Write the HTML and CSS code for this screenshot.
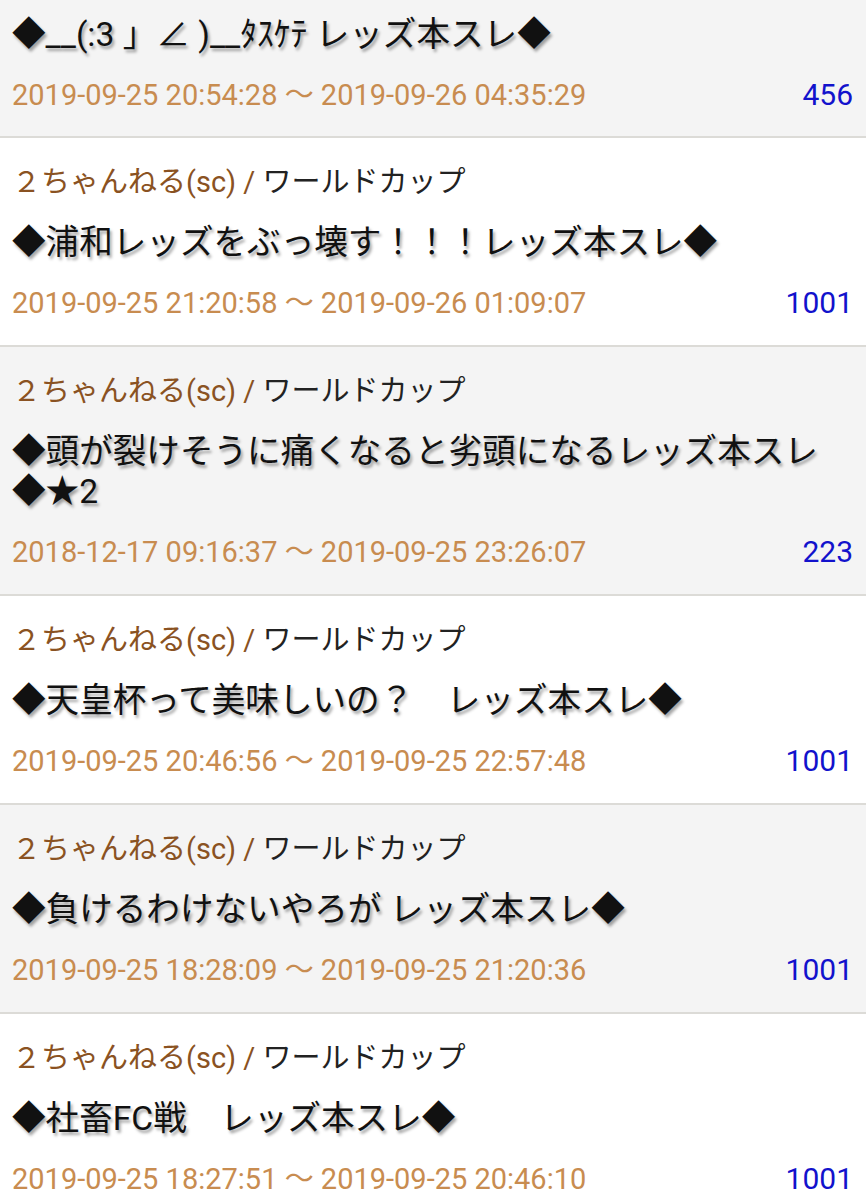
FILE: index.html
```html
<!DOCTYPE html>
<html lang="ja">
<head>
<meta charset="utf-8">
<title>スレッド一覧</title>
<link rel="stylesheet" href="styles.css">
</head>
<body>
<ul class="thread-list">
  <li class="thread thread-alt thread-first">
    <div class="thread-title">◆__(:3 」∠ )__ﾀｽｹﾃ レッズ本スレ◆</div>
    <div class="thread-meta"><span class="thread-date">2019-09-25 20:54:28 ～ 2019-09-26 04:35:29</span><span class="thread-count">456</span></div>
  </li>
  <li class="thread">
    <div class="thread-board"><span class="board-site">２ちゃんねる(sc) / </span><span class="board-name">ワールドカップ</span></div>
    <div class="thread-title">◆浦和レッズをぶっ壊す！！！レッズ本スレ◆</div>
    <div class="thread-meta"><span class="thread-date">2019-09-25 21:20:58 ～ 2019-09-26 01:09:07</span><span class="thread-count">1001</span></div>
  </li>
  <li class="thread thread-alt">
    <div class="thread-board"><span class="board-site">２ちゃんねる(sc) / </span><span class="board-name">ワールドカップ</span></div>
    <div class="thread-title">◆頭が裂けそうに痛くなると劣頭になるレッズ本スレ◆★2</div>
    <div class="thread-meta"><span class="thread-date">2018-12-17 09:16:37 ～ 2019-09-25 23:26:07</span><span class="thread-count">223</span></div>
  </li>
  <li class="thread">
    <div class="thread-board"><span class="board-site">２ちゃんねる(sc) / </span><span class="board-name">ワールドカップ</span></div>
    <div class="thread-title">◆天皇杯って美味しいの？　レッズ本スレ◆</div>
    <div class="thread-meta"><span class="thread-date">2019-09-25 20:46:56 ～ 2019-09-25 22:57:48</span><span class="thread-count">1001</span></div>
  </li>
  <li class="thread thread-alt">
    <div class="thread-board"><span class="board-site">２ちゃんねる(sc) / </span><span class="board-name">ワールドカップ</span></div>
    <div class="thread-title">◆負けるわけないやろが レッズ本スレ◆</div>
    <div class="thread-meta"><span class="thread-date">2019-09-25 18:28:09 ～ 2019-09-25 21:20:36</span><span class="thread-count">1001</span></div>
  </li>
  <li class="thread">
    <div class="thread-board"><span class="board-site">２ちゃんねる(sc) / </span><span class="board-name">ワールドカップ</span></div>
    <div class="thread-title">◆社畜FC戦　レッズ本スレ◆</div>
    <div class="thread-meta"><span class="thread-date">2019-09-25 18:27:51 ～ 2019-09-25 20:46:10</span><span class="thread-count">1001</span></div>
  </li>
</ul>
</body>
</html>
```
FILE: styles.css
```css
html, body {
  margin: 0;
  padding: 0;
  background: #ffffff;
}
body {
  font-family: Roboto, "Noto Sans CJK JP", sans-serif;
  width: 866px;
  overflow: hidden;
}
.thread-list {
  list-style: none;
  margin: 0;
  padding: 0;
}
.thread {
  display: flex;
  flex-direction: column;
  padding: 21px 13px 22px 12px;
  background: #ffffff;
  border-bottom: 2px solid #dcdbd7;
}
.thread-alt {
  background: #f4f4f4;
}
.thread-first {
  padding-top: 15px;
  padding-bottom: 21px;
}
.thread-board {
  font-size: 29px;
  line-height: 46px;
  white-space: nowrap;
}
.board-site {
  color: #8a5222;
}
.board-name {
  color: #222222;
}
.thread-title {
  margin-top: 18px;
  padding-right: 10px;
  font-size: 33.6px;
  line-height: 40px;
  color: #111111;
  text-shadow: 2px 3px 3px rgba(0, 0, 0, 0.35);
}
.thread-first .thread-title {
  margin-top: 0;
}
.thread-meta {
  margin-top: 20px;
  display: flex;
  justify-content: space-between;
  align-items: baseline;
  font-size: 29px;
  line-height: 40px;
}
.thread-date {
  color: #c88c50;
}
.thread-count {
  color: #1212cc;
  font-size: 30px;
}
```
